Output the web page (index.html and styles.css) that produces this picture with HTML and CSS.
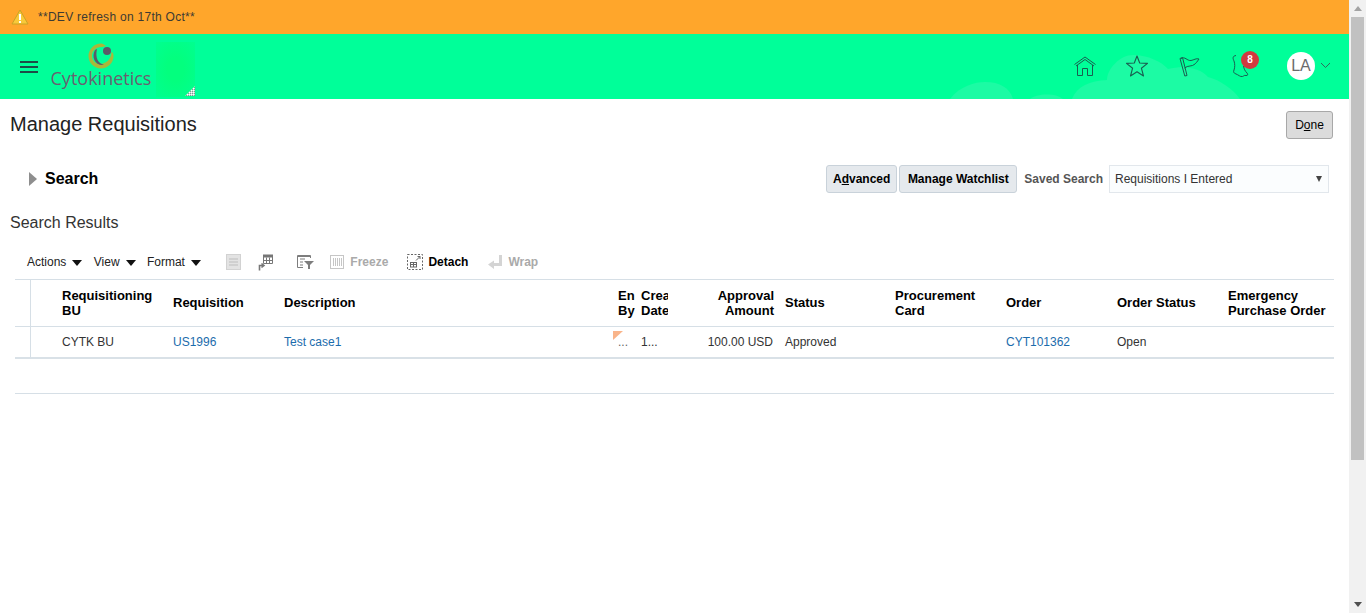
FILE: index.html
```html
<!DOCTYPE html>
<html lang="en">
<head>
	<meta charset="UTF-8">
	<title>Manage Requisitions</title>
	<link rel="stylesheet" href="styles.css">
</head>
<body>
	<div id="page">
		<!-- announcement -->
		<div class="banner">
			<svg class="banner-icon" width="18" height="16" viewBox="0 0 18 16"><path d="M9 1 L17 15 H1 Z" fill="#f8c93a" stroke="#c9a227" stroke-width="1" stroke-linejoin="round"/><rect x="8" y="5" width="2" height="6" fill="#fff"/><rect x="8" y="12" width="2" height="2" fill="#fff"/></svg>
			<span>**DEV refresh on 17th Oct**</span>
		</div>

		<!-- header -->
		<div class="header">
			<svg class="clouds" width="300" height="65" viewBox="0 0 300 65"><path d="M0 65 C10 52 25 48 35 48 C50 48 60 54 63 65 Z M80 65 C85 60 105 58 113 65 Z M122 65 C127 52 140 47 157 46 C157 35 170 21 183 21 C198 21 212 28 218 35 C235 31 250 34 258 43 C270 46 283 55 290 65 Z" fill="#1cfba4"/></svg>
			<a class="menu" href="javascript:;"><span></span><span></span><span></span></a>
			<div class="logo">
				<svg width="26" height="26" viewBox="0 0 26 26"><path d="M13 0.500 A12.500 12.500 0 1 0 25.500 13 C25.500 11 25 9.500 23.500 9 C23.500 16 18 21 12 21 C7 21 4 17 4 13 C4 8 8 4 13 4 C15 4 16 3.500 18 3 C16 1.500 15 0.500 13 0.500 Z" fill="#a9b83a"/><path d="M7 7 C3 14 7 23 16 22 C10 20 7 15 9 6 Z" fill="#5d5868"/><circle cx="19" cy="8" r="4" fill="#5d5868"/></svg>
				<span class="logo-text">Cytokinetics</span>
			</div>
			<div class="logo-blot">
				<svg class="blot-dots" width="10" height="10" viewBox="0 0 10 10"><defs><pattern id="dots" width="2" height="2" patternUnits="userSpaceOnUse"><rect width="1" height="1" fill="#ffffff"/><rect x="1" y="1" width="1" height="1" fill="#7f9a90"/><rect x="1" width="1" height="1" fill="#c8dcd4"/><rect y="1" width="1" height="1" fill="#c8dcd4"/></pattern></defs><path d="M10 0 V10 H0 Z" fill="url(#dots)"/></svg>
			</div>

			<div class="header-right">
				<a class="head-icon" href="javascript:;">
					<svg width="24" height="22" viewBox="0 0 24 22" fill="none" stroke="#1a5e50" stroke-width="1"><path d="M1.500 9.500 L12 2 L22.500 9.500 M3 11 L12 4.500 L21 11"/><path d="M4.500 10 V20.500 H9.500 V13.500 H14.500 V20.500 H19.500 V10"/></svg>
				</a>
				<a class="head-icon" href="javascript:;">
					<svg width="24" height="22" viewBox="0 0 24 22" fill="none" stroke="#1a5e50" stroke-width="1.100"><path d="M12 1 L14.700 8 L22.500 8.400 L16.400 13.200 L18.500 21 L12 16.700 L5.500 21 L7.600 13.200 L1.500 8.400 L9.300 8 Z" stroke-linejoin="round"/></svg>
				</a>
				<a class="head-icon" href="javascript:;">
					<svg width="24" height="22" viewBox="0 0 24 22" fill="none" stroke="#1a5e50" stroke-width="1"><path d="M3 3.500 L5.500 2.500 L10 20.500 L7.800 21 Z"/><path d="M4 3.500 C8 1 10 6 14 5.500 C17 5 19 3 22 4 C20 7 19 8 18 9 C15 12 11 10 7.500 13"/></svg>
				</a>
				<a class="head-icon" href="javascript:;">
					<svg width="24" height="24" viewBox="0 0 24 24" fill="none" stroke="#1a5e50" stroke-width="1"><path d="M7 1.500 C3 2 4 5 5 7 C6 10 6 13 5 16 C4 18 5 19 6 19.500 C10 21 11 23 13.500 22.500 C15 22 15 21 17 21.500 C19 22 19 20 18 19 C16 17 15 15 14.500 12"/></svg>
					<span class="badge">8</span>
				</a>
				<a class="user" href="javascript:;">
					<span class="avatar">LA</span>
					<svg width="11" height="7" viewBox="0 0 11 7" fill="none" stroke="#2f6a5c" stroke-width="1"><path d="M1 1 L5.500 5.500 L10 1"/></svg>
				</a>
			</div>
		</div>

		<!-- title -->
		<div class="title-row">
			<h1>Manage Requisitions</h1>
			<a class="btn-done" href="javascript:;">D<u>o</u>ne</a>
		</div>

		<!-- search -->
		<div class="search-row">
			<div class="search-left">
				<span class="disclosure"></span>
				<span class="search-title">Search</span>
			</div>
			<div class="search-right">
				<a class="btn btn-adv" href="javascript:;">A<u>d</u>vanced</a>
				<a class="btn btn-watch" href="javascript:;">Manage Watchlist</a>
				<span class="saved-label">Saved Search</span>
				<div class="select">
					<span>Requisitions I Entered</span>
					<i class="select-arrow"></i>
				</div>
			</div>
		</div>

		<h2>Search Results</h2>

		<!-- toolbar -->
		<div class="toolbar">
			<a class="menu-item" href="javascript:;">Actions<i></i></a>
			<a class="menu-item" href="javascript:;">View<i></i></a>
			<a class="menu-item" href="javascript:;">Format<i></i></a>

			<svg class="tool tool-doc" width="15" height="16" viewBox="0 0 15 16"><rect x="0.500" y="0.500" width="14" height="15" fill="#e3e3e3" stroke="#d2d2d2"/><path d="M3 5 H12 M3 8 H12 M3 11 H12" stroke="#bdbdbd"/></svg>
			<svg class="tool tool-cols" width="16" height="17" viewBox="0 0 16 17" fill="none" stroke="#777"><rect x="5" y="0.500" width="10" height="3" fill="#777" stroke="none"/><path d="M5.500 1.500 H14.500 V9.500 H5.500 Z M8.500 3.500 V9.500 M11.500 3.500 V9.500 M5.500 6.500 H14.500"/><path d="M1.500 16.500 V11.500 H5 M3.500 9.500 L6 11.500 L3.500 13.500" stroke-width="1.600"/></svg>
			<svg class="tool tool-filter" width="18" height="16" viewBox="0 0 18 16"><path d="M1.500 1.500 H14.500 V4 M1.500 1.500 V13.500 H7 M4 5 H9 M4 8 H7 M4 11 H7" fill="none" stroke="#7d7d7d"/><rect x="2" y="1" width="12" height="2" fill="#7d7d7d"/><path d="M8 7 H18 L14 11 V15 H12 V11 Z" fill="#7d7d7d"/></svg>
			<svg class="tool tool-freeze" width="16" height="16" viewBox="0 0 16 16" fill="none" stroke="#c6c6c6"><rect x="1.500" y="1.500" width="13" height="13"/><path d="M4.500 4 V12 M6.500 4 V12 M8.500 4 V12 M10.500 4 V12 M12.500 4 V12"/></svg>
			<span class="tool-text off">Freeze</span>
			<svg class="tool tool-detach" width="16" height="16" viewBox="0 0 16 16" fill="none" stroke="#666"><rect x="0.500" y="0.500" width="15" height="15" stroke-dasharray="2 1.500"/><rect x="3.500" y="8.500" width="6" height="4.500"/><path d="M3.500 10.500 H9.500 M6.500 8.500 V13"/><path d="M9 6.500 L13 2.500 M10.500 2.500 H13 V5"/></svg>
			<span class="tool-text">Detach</span>
			<svg class="tool tool-wrap" width="15" height="15" viewBox="0 0 15 15"><path d="M11 0 H14 V11 H6 V14 L0 9.500 L6 5.500 V8 H11 Z" fill="#d4d4d4"/></svg>
			<span class="tool-text off">Wrap</span>
		</div>

		<!-- results -->
		<table class="results">
			<colgroup>
				<col class="c-sel"><col class="c-gap"><col class="c-wide"><col class="c-wide"><col class="c-desc"><col class="c-by"><col class="c-date"><col class="c-amount"><col class="c-status"><col class="c-wide"><col class="c-wide"><col class="c-wide"><col class="c-wide">
			</colgroup>
			<thead>
				<tr>
					<th class="sel"></th>
					<th></th>
					<th>Requisitioning BU</th>
					<th>Requisition</th>
					<th>Description</th>
					<th class="clip">En<br>By</th>
					<th class="clip">Crea<br>Date</th>
					<th class="num">Approval Amount</th>
					<th>Status</th>
					<th>Procurement Card</th>
					<th>Order</th>
					<th>Order Status</th>
					<th>Emergency Purchase Order</th>
				</tr>
			</thead>
			<tbody>
				<tr>
					<td class="sel"></td>
					<td></td>
					<td>CYTK BU</td>
					<td><a href="javascript:;">US1996</a></td>
					<td><a href="javascript:;">Test case1</a></td>
					<td class="clip flagged"><i class="flag"></i>...</td>
					<td class="clip">1...</td>
					<td class="num amount">100.00 USD</td>
					<td>Approved</td>
					<td></td>
					<td><a href="javascript:;">CYT101362</a></td>
					<td>Open</td>
					<td></td>
				</tr>
			</tbody>
		</table>
		<div class="table-foot"></div>
	</div>

	<!-- page scrollbar -->
	<div class="scrollbar">
		<i class="sb-up"></i>
		<div class="sb-thumb"></div>
		<i class="sb-down"></i>
	</div>
</body>
</html>
```

FILE: styles.css
```css
html, body, h1, h2, table, th, td {
	margin: 0;
	padding: 0;
}
html, body {
	height: 613px;
	overflow: hidden;
}
body {
	display: flex;
	background: #ffffff;
	color: #333333;
	font-family: "Liberation Sans", Arial, sans-serif;
	font-size: 12px;
}
a {
	text-decoration: none;
	color: inherit;
}
i {
	display: block;
}
#page {
	width: 1349px;
	flex: none;
}

/* banner */
.banner {
	height: 33px;
	background: #ffa62b;
	display: flex;
	align-items: center;
	padding-left: 11px;
	color: #3d3a33;
	letter-spacing: 0.28px;
	border-bottom: 1px solid #ffa62b;
}
.banner-icon {
	margin-right: 9px;
}

/* header */
.header {
	position: relative;
	height: 65px;
	background: #00ff99;
	display: flex;
	align-items: center;
	padding: 0 18px 0 20px;
	overflow: hidden;
}
.clouds {
	position: absolute;
	left: 950px;
	bottom: 0;
}
.menu {
	width: 18px;
	margin-right: 12px;
	position: relative;
}
.menu span {
	display: block;
	height: 2px;
	background: #1d4d47;
	margin-bottom: 3px;
}
.menu span:last-child {
	margin-bottom: 0;
}
.logo {
	width: 102px;
	height: 65px;
	padding-top: 9px;
	box-sizing: border-box;
	display: flex;
	flex-direction: column;
	align-items: center;
}
.logo-text {
	font-family: "Open Sans", sans-serif;
	font-size: 18px;
	line-height: 22px;
	color: #6a5f70;
	margin-top: -2px;
}
.logo-blot {
	width: 39px;
	height: 55px;
	margin-left: 4px;
	margin-top: 6px;
	background: radial-gradient(ellipse at center, #03ff7e 30%, #00ff90 100%);
	position: relative;
}
.blot-dots {
	position: absolute;
	right: 0;
	bottom: 1px;
}
.header-right {
	margin-left: auto;
	margin-bottom: 2px;
	display: flex;
	align-items: center;
	position: relative;
}
.head-icon {
	position: relative;
	width: 26px;
	height: 24px;
	margin-right: 26px;
	display: flex;
	justify-content: center;
	align-items: center;
}
.badge {
	position: absolute;
	left: 13px;
	top: -3px;
	width: 18px;
	height: 18px;
	border-radius: 50%;
	background: #d1393f;
	color: #ffffff;
	font-size: 10px;
	font-weight: bold;
	line-height: 18px;
	text-align: center;
}
.user {
	display: flex;
	align-items: center;
	margin-left: 7px;
}
.avatar {
	width: 28px;
	height: 28px;
	border-radius: 50%;
	background: #ffffff;
	color: #6b6b6b;
	font-size: 16px;
	line-height: 28px;
	text-align: center;
	margin-right: 5px;
}

/* title */
.title-row {
	display: flex;
	justify-content: space-between;
	align-items: center;
	padding: 12px 16px 0 10px;
}
h1 {
	font-size: 20px;
	font-weight: normal;
	color: #222222;
	padding-bottom: 2px;
}
.btn-done {
	width: 47px;
	height: 28px;
	box-sizing: border-box;
	border: 1px solid #a8a8a8;
	border-radius: 3px;
	background: #dcdcdc;
	color: #000000;
	line-height: 26px;
	text-align: center;
}

/* search */
.search-row {
	display: flex;
	justify-content: space-between;
	align-items: center;
	margin-top: 26px;
	padding: 0 20px 0 29px;
}
.search-left {
	display: flex;
	align-items: center;
}
.disclosure {
	width: 0;
	height: 0;
	border-left: 8px solid #8e8e8e;
	border-top: 7px solid transparent;
	border-bottom: 7px solid transparent;
	margin-right: 8px;
}
.search-title {
	font-size: 16px;
	font-weight: bold;
	color: #000000;
}
.search-right {
	display: flex;
	align-items: center;
}
.btn {
	height: 28px;
	box-sizing: border-box;
	padding: 0 8px;
	margin-right: 2px;
	border: 1px solid #c9d2da;
	border-radius: 3px;
	background: #e5e9ed;
	color: #000000;
	font-weight: bold;
	line-height: 26px;
}
.btn-adv {
	padding: 0 6px;
}
.btn-watch {
	padding: 0 7.500px;
}
.saved-label {
	margin: 0 6px 0 5px;
	font-weight: bold;
	color: #555555;
}
.select {
	width: 220px;
	height: 28px;
	box-sizing: border-box;
	border: 1px solid #e2e7ec;
	background: #fbfdfe;
	display: flex;
	justify-content: space-between;
	align-items: center;
	padding: 0 6px 0 5px;
}
.select-arrow {
	border-left: 3.500px solid transparent;
	border-right: 3.500px solid transparent;
	border-top: 6px solid #444444;
}

/* results */
h2 {
	font-size: 16px;
	font-weight: normal;
	color: #333333;
	margin: 21px 0 0 10px;
	line-height: 18px;
}
.toolbar {
	display: flex;
	align-items: center;
	height: 24px;
	margin-top: 18px;
	padding-left: 27px;
}
.menu-item {
	display: flex;
	align-items: center;
	color: #222222;
	margin-right: 11.400px;
}
.menu-item i {
	margin-left: 6px;
	margin-top: 2px;
	border-left: 5px solid transparent;
	border-right: 5px solid transparent;
	border-top: 6px solid #111111;
}
.tool {
	flex: none;
}
.tool-doc {
	margin-left: 14px;
}
.tool-cols {
	margin-left: 17px;
}
.tool-filter {
	margin-left: 22px;
}
.tool-freeze {
	margin-left: 15px;
}
.tool-detach {
	margin-left: 19px;
}
.tool-wrap {
	margin-left: 20px;
}
.tool-text {
	margin-left: 5px;
	font-weight: bold;
	color: #000000;
}
.tool-text.off {
	color: #aaaaaa;
}
.results {
	margin: 5px 0 0 15px;
	width: 1319px;
	table-layout: fixed;
	border-collapse: separate;
	border-spacing: 0;
	border-top: 1px solid #d6dfe6;
}
.c-sel { width: 16px; }
.c-gap { width: 26px; }
.c-wide { width: 111px; }
.c-desc { width: 334px; }
.c-by { width: 23px; }
.c-date { width: 32px; }
.c-amount { width: 112px; }
.c-status { width: 110px; }
th, td {
	padding: 0 4px 0 5px;
	text-align: left;
	vertical-align: middle;
}
th {
	height: 45px;
	font-size: 13px;
	line-height: 15px;
	color: #000000;
	padding-bottom: 1px;
	border-bottom: 1px solid #d6dfe6;
}
td {
	height: 30px;
	color: #333333;
	border-bottom: 2px solid #d9e1e7;
}
td a {
	color: #1b6cac;
}
.sel {
	padding: 0;
	border-right: 1px solid #d6dfe6;
}
.clip {
	padding-right: 1px;
	overflow: hidden;
	white-space: nowrap;
}
.num {
	text-align: right;
	padding-right: 6px;
}
.amount {
	padding-right: 7px;
}
.flagged {
	position: relative;
	color: #666666;
}
.flag {
	position: absolute;
	left: 0;
	top: 4px;
	border-top: 9px solid #f9b48a;
	border-right: 10px solid transparent;
}
.table-foot {
	margin: 34px 15px 0;
	border-top: 1px solid #d6dfe6;
}

/* fake scrollbar of the window */
.scrollbar {
	width: 17px;
	height: 613px;
	flex: none;
	background: #f1f1f1;
	position: relative;
	display: flex;
	flex-direction: column;
	align-items: center;
}
.sb-thumb {
	width: 13px;
	height: 443px;
	background: #c1c1c1;
	margin-top: 6px;
}
.sb-up {
	margin-top: 6px;
	border-left: 4px solid transparent;
	border-right: 4px solid transparent;
	border-bottom: 5px solid #a3a3a3;
}
.sb-down {
	margin-top: auto;
	margin-bottom: 6px;
	border-left: 4px solid transparent;
	border-right: 4px solid transparent;
	border-top: 5px solid #505050;
}
```
